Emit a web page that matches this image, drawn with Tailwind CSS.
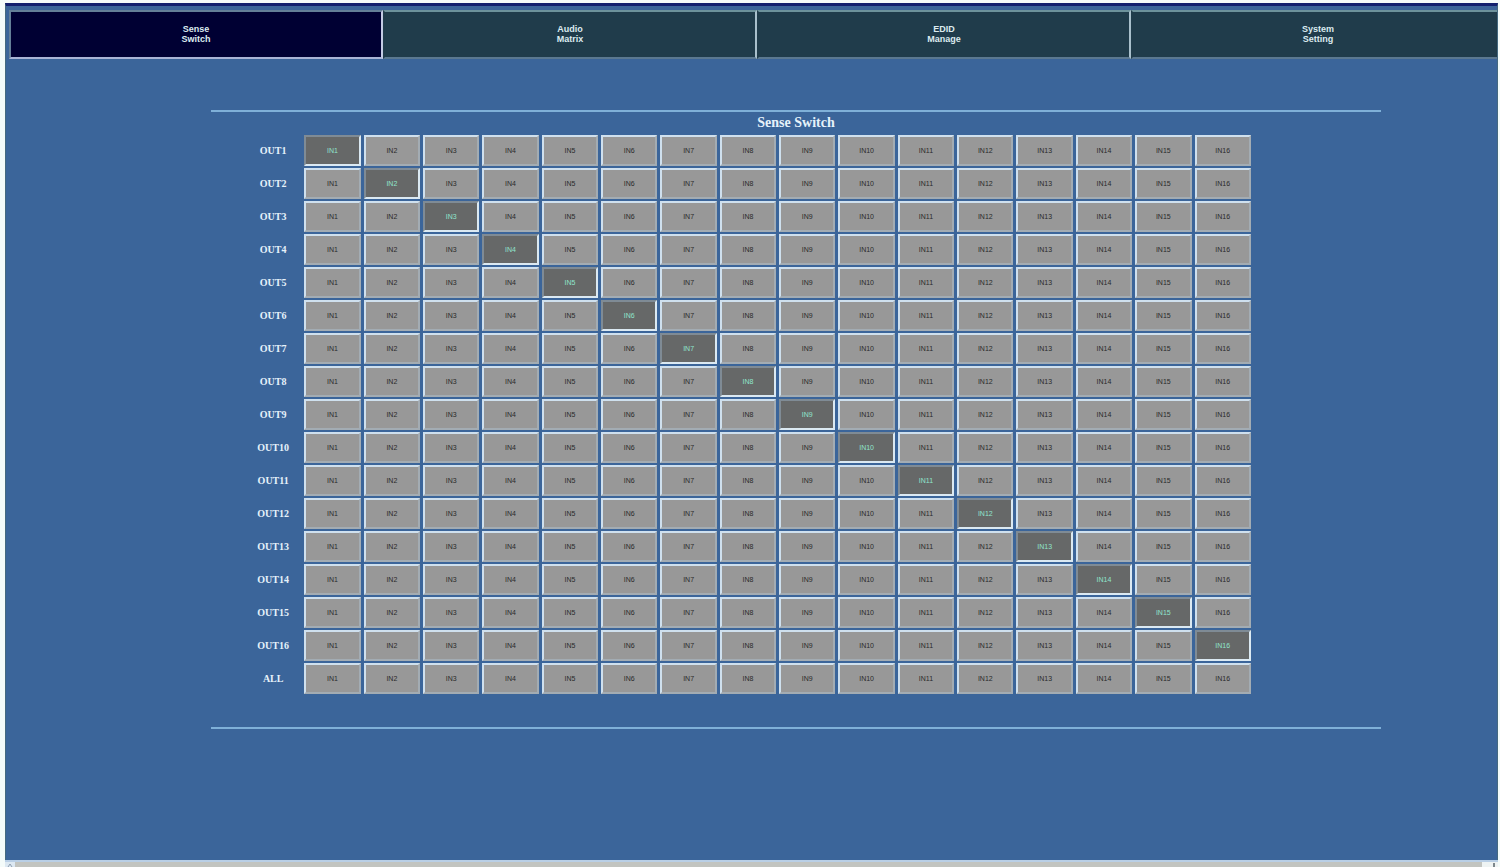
<!DOCTYPE html>
<html lang="en">
<head>
  <meta charset="UTF-8">
  <meta name="viewport" content="width=device-width, initial-scale=1.0">
  <title>Sense Switch</title>
  <script src="https://cdn.jsdelivr.net/npm/@tailwindcss/browser@4"></script>
</head>
<body class="bg-[#f4fbfa]">
  <div class="min-h-screen flex flex-col pt-[3px] pl-[5px] pr-[2px]">
    <main class="grow overflow-hidden bg-[#3b659a] border-t-3 border-t-[#12206e] border-x border-x-[#44697f]">
      <!-- Tabs -->
      <nav class="grid grid-cols-4 mt-1 ml-[3px] -mr-2 font-['Liberation_Sans',sans-serif] text-[9px] leading-[10px] font-bold text-[#dcebf0]">
        <button class="h-[49px] pb-[2px] bg-[#000033] border-2 border-t-[#647f98] border-l-[#647f98] border-r-[#c4cbe4] border-b-[#a9b4d6]">Sense<br>Switch</button>
        <button class="h-[49px] pb-[2px] bg-[#203c4b] border-2 border-t-[#6d929b] border-l-[#203c4b] border-r-[#a9c0cc] border-b-[#5b7890]">Audio<br>Matrix</button>
        <button class="h-[49px] pb-[2px] bg-[#203c4b] border-2 border-t-[#6d929b] border-l-[#203c4b] border-r-[#a9c0cc] border-b-[#5b7890]">EDID<br>Manage</button>
        <button class="h-[49px] pb-[2px] bg-[#203c4b] border-2 border-t-[#6d929b] border-l-[#203c4b] border-r-[#a9c0cc] border-b-[#5b7890]">System<br>Setting</button>
      </nav>

      <!-- Switch matrix -->
      <section class="mt-[51px] ml-[205px] mr-[116px] pb-[31px] border-y-2 border-[#7fb0d8] font-['Liberation_Serif',serif] font-bold text-[#e6f2fa]">
        <h1 class="h-[21px] pt-[3px] text-center text-[14px] leading-4">Sense Switch</h1>
        <div class="pl-[31px] pr-[127px]">
          <table class="w-full table-fixed border-separate border-spacing-x-[3px] border-spacing-y-[2px]">
            <tbody id="matrix"></tbody>
          </table>
        </div>
      </section>
    </main>

    <!-- Scrollbar -->
    <div class="h-[7px] flex justify-between bg-[#c2c4c0] border-t-2 border-[#b9cfe6]">
      <span class="w-[10px] bg-[#dce8f2] flex justify-center">
        <svg class="w-[6px] h-[5px]" viewBox="0 0 6 5"><path d="M1 5 3 2 5 5" fill="none" stroke="#8fa0b0" /></svg>
      </span>
      <span class="w-[16px] bg-[#eef3f3] flex justify-end">
        <svg class="w-[6px] h-[5px]" viewBox="0 0 6 5"><path d="M2 1v4" fill="none" stroke="#7d878c" stroke-width="2" /></svg>
      </span>
    </div>
  </div>

  <script>
    const OFF = "block w-full h-[31px] border-2 bg-[#989898] border-t-[#cfe0ee] border-l-[#cfe0ee] border-r-[#a3acb3] border-b-[#a3acb3] text-[#2a2a2a]";
    const ON = "block w-full h-[31px] border-2 bg-[#666868] border-t-[#7f8b95] border-l-[#7f8b95] border-r-[#dbe9f2] border-b-[#dbe9f2] text-[#8fe4cc]";
    const matrix = document.getElementById('matrix');

    function addRow(label, selected) {
      const row = document.createElement('tr');
      let html = `<th scope="row" class="p-0 text-[10px] leading-3 text-center">${label}</th>`;
      for (let i = 1; i <= 16; i++) {
        html += `<td class="p-0 font-['Liberation_Sans',sans-serif] text-[7px] leading-2 font-normal"><button class="${i === selected ? ON : OFF}" aria-label="${label} IN${i}">IN${i}</button></td>`;
      }
      row.innerHTML = html;
      row.addEventListener('click', function(e) {
        if (e.target.tagName !== 'BUTTON') return;
        row.querySelectorAll('button').forEach(b => b.className = OFF);
        e.target.className = ON;
      });
      matrix.appendChild(row);
    }

    for (let out = 1; out <= 16; out++) {
      addRow('OUT' + out, out);
    }
    addRow('ALL', 0);
  </script>
</body>
</html>
